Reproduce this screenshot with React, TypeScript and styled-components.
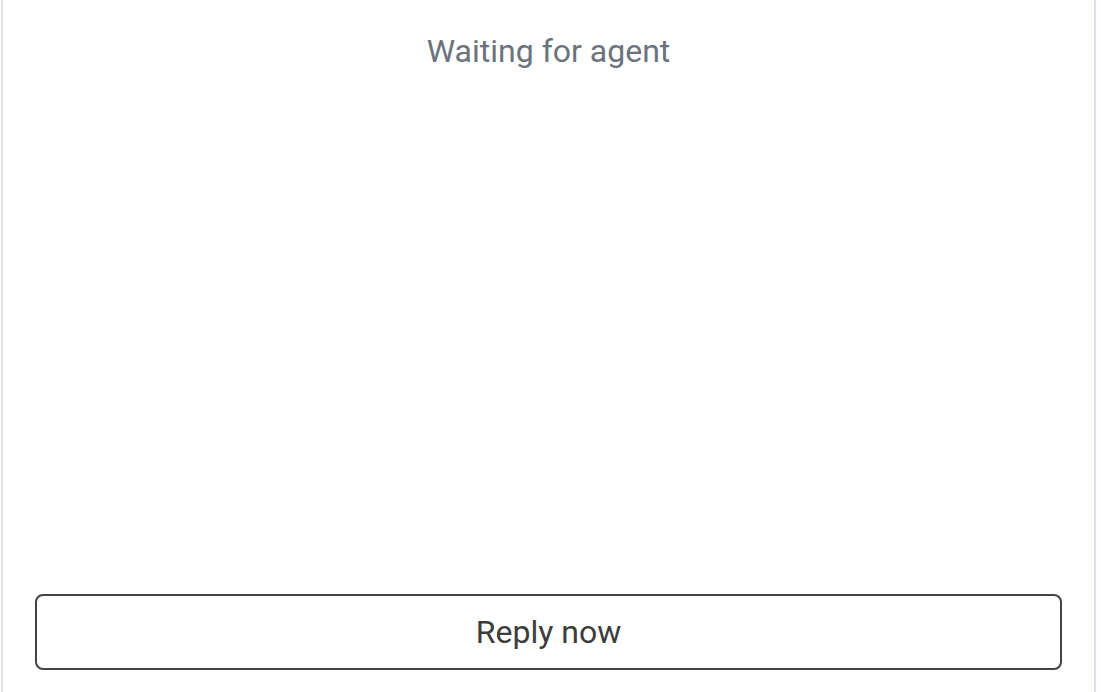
import React from "react";
import styled, { createGlobalStyle } from "styled-components";

const GlobalStyle = createGlobalStyle`
  html, body { margin: 0; padding: 0; background: #ffffff; }
  body { font-family: Roboto, "Noto Sans", "Liberation Sans", sans-serif; }
`;

const Panel = styled.div`
  box-sizing: border-box;
  margin-left: 1px;
  width: 1095px;
  height: 692px;
  border-left: 2px solid #e2e2e2;
  border-right: 2px solid #dde1e6;
  display: flex;
  flex-direction: column;
  align-items: stretch;
  padding: 32px 32px 22px 32px;
`;

const Status = styled.div`
  text-align: center;
  font-size: 32px;
  line-height: 38px;
  color: #6b737d;
`;

const Spacer = styled.div`
  flex: 1;
`;

const ReplyButton = styled.button`
  box-sizing: border-box;
  height: 76px;
  width: 100%;
  background: #ffffff;
  border: 2px solid #444444;
  border-radius: 8px;
  font-family: Roboto, "Noto Sans", "Liberation Sans", sans-serif;
  font-size: 32px;
  color: #3c3c3c;
  cursor: pointer;
`;

export default function App() {
  return (
    <>
      <GlobalStyle />
      <Panel>
        <Status>Waiting for agent</Status>
        <Spacer />
        <ReplyButton>Reply now</ReplyButton>
      </Panel>
    </>
  );
}
